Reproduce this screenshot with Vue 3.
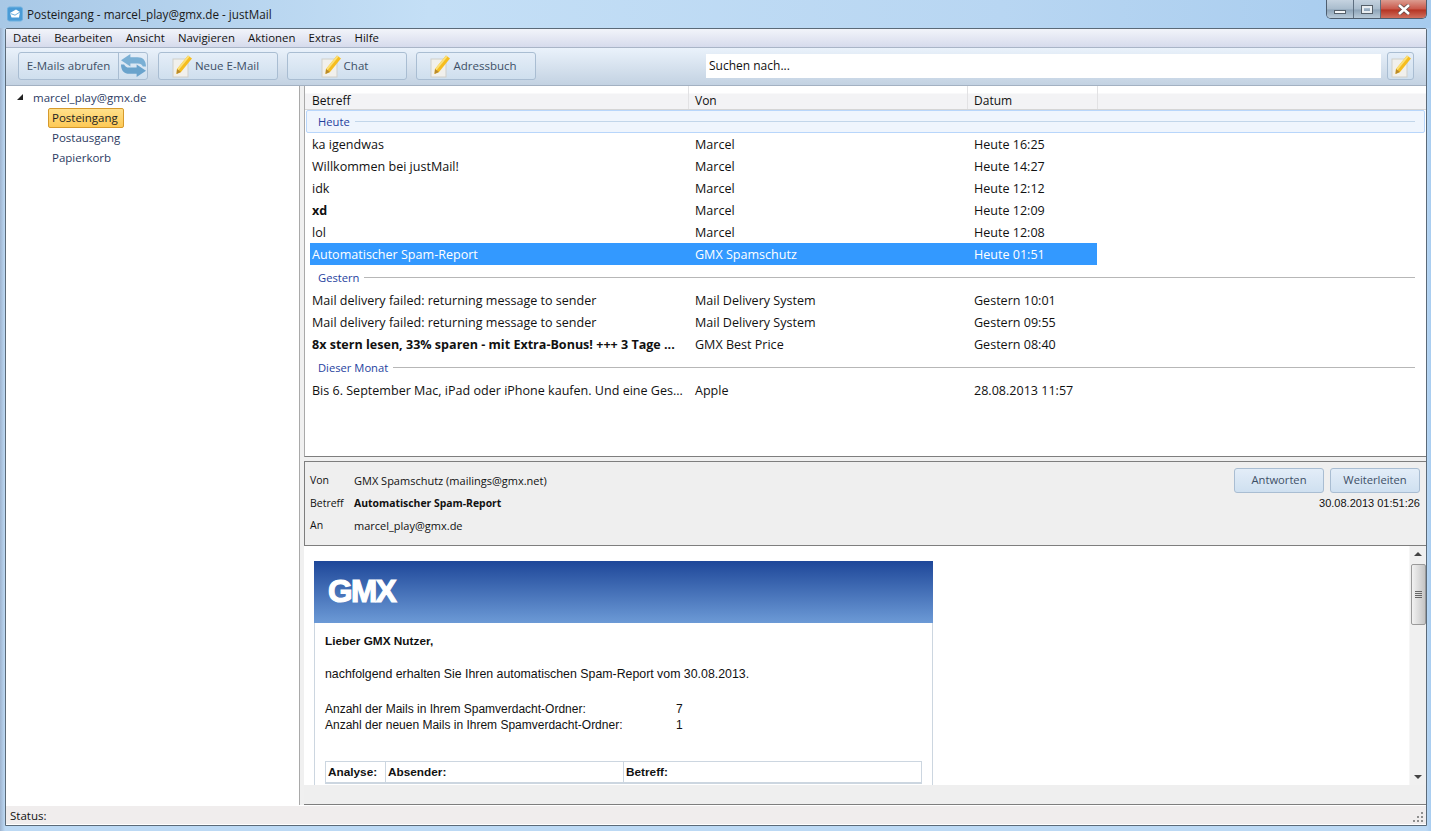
<template>
  <div class="window">
    <div class="titlebar">
      <svg class="app-icon" width="16" height="16" viewBox="0 0 16 16">
        <rect x="0.5" y="1" width="15" height="14" rx="2" fill="#4a9bd6" stroke="#6fb1e0" />
        <path d="M3 7 L9 3.5 L13 6 L12 11.5 L4.5 11.5 Z" fill="#fff" />
        <path d="M3.5 7.5 L8 9.2 L13 6" fill="none" stroke="#6aaedd" />
      </svg>
      <span class="title-text">Posteingang - marcel_play@gmx.de - justMail</span>
      <div class="win-controls">
        <div class="win-btn min"><i></i></div>
        <div class="win-btn max"><i></i></div>
        <div class="win-btn close">
          <svg width="14" height="11" viewBox="0 0 14 11">
            <path d="M2 1 L12 10 M12 1 L2 10" stroke="#5b4a4a" stroke-width="4" />
            <path d="M2 1 L12 10 M12 1 L2 10" stroke="#fff" stroke-width="2.6" />
          </svg>
        </div>
      </div>
    </div>

    <div class="client">
      <div class="menubar">
        <span v-for="m in menus" :key="m">{{ m }}</span>
      </div>

      <div class="toolbar">
        <div class="tb-btn fetch">
          <span class="fetch-label">E-Mails abrufen</span>
          <span class="fetch-icon">
            <svg width="25" height="23" viewBox="0 0 24 22">
              <path d="M9 0 L0 6 L9 12 V9 H16 C19 9 20 10 21 12 L24 12 C24 6 21 3 16 3 H9 Z" fill="#7aafd4" />
              <path d="M15 22 L24 16 L15 10 V13 H8 C5 13 4 12 3 10 L0 10 C0 16 3 19 8 19 H15 Z" fill="#6aa3cc" />
            </svg>
          </span>
        </div>
        <div v-for="b in toolButtons" :key="b" class="tb-btn wide">
          <svg class="note" width="20" height="24" viewBox="0 0 20 24">
            <rect x="1" y="5" width="15" height="18" fill="#f1f0ec" stroke="#cfcfca" />
            <path d="M5 15 L16 1.5 L20 4.5 L9 18 L4.5 20 Z" fill="#f5bd1f" />
            <path d="M5 15 L16 1.5 L17.5 2.7 L6.5 16.2 Z" fill="#fbe07a" />
            <path d="M5 15 L4.5 20 L9 18 Z" fill="#b98a2e" />
          </svg>
          <span>{{ b }}</span>
        </div>
        <div class="search">Suchen nach...</div>
        <div class="tb-btn square">
          <svg class="note" width="20" height="24" viewBox="0 0 20 24">
            <rect x="1" y="5" width="15" height="18" fill="#f1f0ec" stroke="#cfcfca" />
            <path d="M5 15 L16 1.5 L20 4.5 L9 18 L4.5 20 Z" fill="#f5bd1f" />
            <path d="M5 15 L16 1.5 L17.5 2.7 L6.5 16.2 Z" fill="#fbe07a" />
            <path d="M5 15 L4.5 20 L9 18 Z" fill="#b98a2e" />
          </svg>
        </div>
      </div>

      <div class="main">
        <aside class="tree">
          <div class="tree-root">
            <span class="arrow"></span>
            <span>marcel_play@gmx.de</span>
          </div>
          <div v-for="f in folders" :key="f" class="folder" :class="{ active: f === 'Posteingang' }">{{ f }}</div>
        </aside>

        <section class="right">
          <div class="list">
            <div class="list-head">
              <div class="hc h1">Betreff</div>
              <div class="hc h2">Von</div>
              <div class="hc h3">Datum</div>
            </div>
            <template v-for="g in groups" :key="g.name">
              <div class="group" :class="{ current: g.current }">
                <span>{{ g.name }}</span>
                <i></i>
              </div>
              <div v-for="r in g.rows" :key="r.subject + r.date" class="row" :class="{ selected: r.selected, unread: r.unread }">
                <span class="cell">{{ r.subject }}</span>
                <span class="cell">{{ r.from }}</span>
                <span class="cell">{{ r.date }}</span>
              </div>
            </template>
          </div>

          <div class="detail">
            <div class="meta">
              <div class="meta-row"><span class="k">Von</span><span>GMX Spamschutz (mailings@gmx.net)</span></div>
              <div class="meta-row"><span class="k">Betreff</span><b>Automatischer Spam-Report</b></div>
              <div class="meta-row"><span class="k">An</span><span>marcel_play@gmx.de</span></div>
            </div>
            <div class="actions">
              <div class="action-btns">
                <div class="act">Antworten</div>
                <div class="act">Weiterleiten</div>
              </div>
              <div class="stamp">30.08.2013 01:51:26</div>
            </div>
          </div>

          <div class="preview">
            <div class="mail-scroll">
              <div class="mail">
                <div class="mail-head"><span class="gmx">GMX</span></div>
                <div class="mail-body">
                  <p class="hello">Lieber GMX Nutzer,</p>
                  <p class="intro">nachfolgend erhalten Sie Ihren automatischen Spam-Report vom 30.08.2013.</p>
                  <div class="stat"><span>Anzahl der Mails in Ihrem Spamverdacht-Ordner:</span><span>7</span></div>
                  <div class="stat"><span>Anzahl der neuen Mails in Ihrem Spamverdacht-Ordner:</span><span>1</span></div>
                  <div class="spam-table">
                    <div class="tc">Analyse:</div>
                    <div class="tc">Absender:</div>
                    <div class="tc">Betreff:</div>
                  </div>
                </div>
              </div>
            </div>
            <div class="scrollbar">
              <span class="up"></span>
              <div class="thumb"><i></i><i></i><i></i><i></i></div>
              <span class="down"></span>
            </div>
          </div>
          <div class="preview-foot"></div>
        </section>
      </div>

      <div class="status">
        <span>Status:</span>
        <svg class="grip" width="11" height="11" viewBox="0 0 11 11">
          <path d="M8 0h2v2H8zM4 4h2v2H4zM8 4h2v2H8zM0 8h2v2H0zM4 8h2v2H4zM8 8h2v2H8z" fill="#8f8f8f" />
        </svg>
      </div>
    </div>
  </div>
</template>

<script setup>
const menus = ['Datei', 'Bearbeiten', 'Ansicht', 'Navigieren', 'Aktionen', 'Extras', 'Hilfe']
const toolButtons = ['Neue E-Mail', 'Chat', 'Adressbuch']
const folders = ['Posteingang', 'Postausgang', 'Papierkorb']

const groups = [
  {
    name: 'Heute',
    current: true,
    rows: [
      { subject: 'ka igendwas', from: 'Marcel', date: 'Heute 16:25' },
      { subject: 'Willkommen bei justMail!', from: 'Marcel', date: 'Heute 14:27' },
      { subject: 'idk', from: 'Marcel', date: 'Heute 12:12' },
      { subject: 'xd', from: 'Marcel', date: 'Heute 12:09', unread: true },
      { subject: 'lol', from: 'Marcel', date: 'Heute 12:08' },
      { subject: 'Automatischer Spam-Report', from: 'GMX Spamschutz', date: 'Heute 01:51', selected: true }
    ]
  },
  {
    name: 'Gestern',
    rows: [
      { subject: 'Mail delivery failed: returning message to sender', from: 'Mail Delivery System', date: 'Gestern 10:01' },
      { subject: 'Mail delivery failed: returning message to sender', from: 'Mail Delivery System', date: 'Gestern 09:55' },
      { subject: '8x stern lesen, 33% sparen - mit Extra-Bonus! +++ 3 Tage ...', from: 'GMX Best Price', date: 'Gestern 08:40', unread: true }
    ]
  },
  {
    name: 'Dieser Monat',
    rows: [
      { subject: 'Bis 6. September Mac, iPad oder iPhone kaufen. Und eine Ges...', from: 'Apple', date: '28.08.2013 11:57' }
    ]
  }
]
</script>

<style>
html, body {
  margin: 0;
  overflow: hidden;
}
</style>

<style scoped>
.window {
  width: 1431px;
  height: 831px;
  display: flex;
  flex-direction: column;
  box-sizing: border-box;
  overflow: hidden;
  font-family: "Open Sans", "Noto Sans", sans-serif;
  font-size: 12px;
  color: #111;
  background: linear-gradient(90deg, #9fb4cf 0, #bcd9f4 5px, #bcd9f4 1426px, #a9cdf0 100%);
}

.titlebar {
  height: 28px;
  flex-shrink: 0;
  display: flex;
  align-items: center;
  padding-left: 7px;
  background: linear-gradient(90deg, #a8c8e6 0, #c4dff6 30%, #b8d6f2 70%, #a6cbee 100%);
  position: relative;
}

.app-icon {
  margin-right: 4px;
}

.title-text {
  font-size: 11.7px;
  color: #1a1a1a;
}

.win-controls {
  position: absolute;
  top: 0;
  right: 4px;
  display: flex;
  height: 18px;
  border: 1px solid #4e5d6e;
  border-top: 0;
  border-radius: 0 0 5px 5px;
  overflow: hidden;
}

.win-btn {
  display: flex;
  align-items: center;
  justify-content: center;
  box-sizing: border-box;
  border-left: 1px solid #5e6f80;
  background: linear-gradient(#c5d3e0 0, #a9bccd 50%, #8ea4b8 55%, #b9cad8 100%);
}

.win-btn.min {
  width: 26px;
  border-left: 0;
}

.win-btn.min i {
  width: 10px;
  height: 2px;
  margin-top: 5px;
  background: #f4f6f8;
  border: 1px solid #56606a;
}

.win-btn.max {
  width: 27px;
}

.win-btn.max i {
  width: 6px;
  height: 3px;
  border: 2px solid #e8edf1;
  outline: 1px solid #56606a;
}

.win-btn.close {
  width: 46px;
  background: linear-gradient(#dc9c90 0, #c9584a 50%, #b53423 55%, #d0705e 100%);
}

.client {
  flex: 1;
  min-height: 0;
  display: flex;
  flex-direction: column;
  margin: 0 4px 5px 5px;
  border: 1px solid #5b6a78;
  border-radius: 2px 2px 0 0;
  background: #f0f0f0;
}

.menubar {
  height: 16px;
  padding: 0 0 2px 7px;
  flex-shrink: 0;
  display: flex;
  align-items: center;
  gap: 13.2px;
  background: linear-gradient(#f2f4fa, #d6dbec);
  border-bottom: 1px solid #a9b5c7;
  font-size: 11.4px;
  color: #111;
}

.toolbar {
  height: 38px;
  flex-shrink: 0;
  display: flex;
  align-items: center;
  box-sizing: border-box;
  padding: 0 11px 2px 12px;
  background: linear-gradient(#eaf2fb, #c3d2e2);
  border-bottom: 1px solid #a3b1c2;
}

.tb-btn {
  height: 28px;
  box-sizing: border-box;
  display: flex;
  align-items: center;
  justify-content: center;
  gap: 3px;
  border: 1px solid #a9bdd2;
  border-radius: 3px;
  background: linear-gradient(#e5eef8, #cfdfee);
  color: #3d4f66;
  font-size: 11.5px;
}

.fetch {
  width: 130px;
  margin-right: 10px;
  gap: 0;
  justify-content: flex-start;
}

.fetch-label {
  width: 99px;
  height: 100%;
  display: flex;
  align-items: center;
  justify-content: center;
  border-right: 1px solid #a9bdd2;
}

.fetch-icon {
  display: flex;
  flex: 1;
  justify-content: center;
}

.wide {
  width: 120px;
  margin-right: 9px;
  padding-right: 5px;
}

.search {
  width: 675px;
  height: 24px;
  box-sizing: border-box;
  margin-left: 161px;
  margin-right: 6px;
  padding: 3px 3px 0;
  background: #fff;
  color: #111;
  font-size: 12px;
}

.square {
  width: 27px;
}

.main {
  flex: 1;
  min-height: 0;
  display: flex;
}

.tree {
  width: 293px;
  flex-shrink: 0;
  background: #fff;
  border-right: 1px solid #a9a9a9;
  padding-top: 2px;
  color: #2c3b63;
  font-size: 11.5px;
}

.tree-root {
  display: flex;
  align-items: center;
  gap: 10px;
  height: 18px;
  margin-bottom: 2px;
  padding-left: 11px;
}

.arrow {
  width: 0;
  height: 0;
  border-style: solid;
  border-width: 0 0 6px 6px;
  border-color: transparent transparent #222 transparent;
}

.folder {
  width: fit-content;
  height: 20px;
  line-height: 18px;
  margin-left: 42px;
  padding: 0 3px;
  box-sizing: border-box;
  border: 1px solid transparent;
  border-radius: 2px;
}

.folder.active {
  width: 76px;
  background: linear-gradient(#ffe08a, #fdc956);
  border-color: #d69a2c;
  color: #222;
}

.right {
  flex: 1;
  min-width: 0;
  display: flex;
  flex-direction: column;
  margin-left: 4px;
}

.list {
  height: 371px;
  flex-shrink: 0;
  box-sizing: border-box;
  background: #fff;
  border-left: 1px solid #a9a9a9;
  border-bottom: 1px solid #7e7e7e;
  overflow: hidden;
}

.list-head {
  height: 24px;
  display: flex;
  background: linear-gradient(#fff 0, #fff 30%, #f3f3f5 35%, #f3f3f5 100%);
  border-bottom: 1px solid #d5d5d5;
  box-sizing: border-box;
  font-size: 12px;
}

.hc {
  box-sizing: border-box;
  padding: 6px 0 0 6px;
  border-right: 1px solid #e2e2e4;
}

.h1 {
  width: 384px;
  padding-left: 7px;
}

.h2 {
  width: 279px;
}

.h3 {
  width: 130px;
}

.group {
  height: 23px;
  box-sizing: border-box;
  display: flex;
  align-items: center;
  padding: 0 9px 0 11px;
  margin: 1px 1px 0;
  color: #1f3f9e;
  font-size: 11.2px;
  border: 1px solid transparent;
  border-radius: 2px;
}

.group i {
  flex: 1;
  height: 1px;
  margin-left: 5px;
  background: #b7b7b7;
}

.group.current {
  margin-top: 0;
  background: #eff5fd;
  border-color: #b8d6fb;
}

.group.current i {
  background: #c2d6ea;
}

.row {
  height: 22px;
  width: 787px;
  margin-left: 5px;
  display: grid;
  grid-template-columns: 383px 279px 1fr;
  align-items: center;
  padding-left: 2px;
  box-sizing: border-box;
  font-size: 12.55px;
  color: #111;
}

.cell {
  white-space: nowrap;
}

.row.selected {
  background: #3399ff;
  color: #fff;
}

.row.unread {
  font-weight: 700;
}

.row.unread .cell + .cell {
  font-weight: 400;
}

.detail {
  height: 85px;
  flex-shrink: 0;
  box-sizing: border-box;
  margin-top: 4px;
  display: flex;
  justify-content: space-between;
  background: #efefef;
  border: 1px solid #7e7e7e;
  border-right: 0;
}

.meta {
  padding: 7px 0 0 5px;
  font-size: 11px;
}

.meta-row {
  display: flex;
  height: 22.5px;
  align-items: center;
}

.meta-row .k {
  width: 44px;
  font-size: 10.5px;
}

.meta-row b {
  font-size: 10.4px;
}

.actions {
  padding: 6px 6px 0 0;
  display: flex;
  flex-direction: column;
  align-items: flex-end;
}

.action-btns {
  display: flex;
  gap: 6px;
}

.act {
  width: 90px;
  height: 25px;
  box-sizing: border-box;
  display: flex;
  align-items: center;
  justify-content: center;
  padding-bottom: 2px;
  border: 1px solid #a9bdd2;
  border-radius: 3px;
  background: linear-gradient(#e3edf8, #cfe0f0);
  color: #3d4f66;
  font-size: 11.2px;
}

.stamp {
  margin-top: 4px;
  font-family: "Liberation Sans", Arial, sans-serif;
  font-size: 11px;
}

.preview {
  height: 239px;
  flex-shrink: 0;
  display: flex;
  background: #fff;
  overflow: hidden;
}

.mail-scroll {
  flex: 1;
  min-width: 0;
  padding: 15px 0 0 10px;
}

.mail {
  width: 619px;
  font-family: "Liberation Sans", Arial, sans-serif;
  font-size: 12px;
  color: #111;
}

.mail-head {
  height: 62px;
  display: flex;
  align-items: center;
  padding: 0 0 2px 14px;
  box-sizing: border-box;
  background: linear-gradient(#1e4799, #6c9ad6);
}

.gmx {
  font-size: 31.5px;
  font-weight: 700;
  letter-spacing: -1.5px;
  color: #fff;
  -webkit-text-stroke: 1.2px #fff;
}

.mail-body {
  box-sizing: border-box;
  padding: 0 10px 0 10px;
  height: 400px;
  border-left: 1px solid #ccd6e0;
  border-right: 1px solid #ccd6e0;
}

.mail-body p {
  margin: 0;
}

.hello {
  padding-top: 11px;
  height: 33px;
  box-sizing: content-box;
  font-weight: 700;
  font-size: 11.8px;
}

.intro {
  height: 35px;
  font-size: 12.35px;
}

.stat {
  display: grid;
  grid-template-columns: 351px 1fr;
  height: 16px;
}

.spam-table {
  margin-top: 27px;
  display: grid;
  grid-template-columns: 59px 238px 1fr;
  border: 1px solid #ccd6e0;
  font-weight: 700;
  font-size: 11.8px;
}

.tc {
  height: 20px;
  line-height: 20px;
  padding-left: 2px;
  border-bottom: 1px solid #ccd6e0;
}

.tc + .tc {
  border-left: 1px solid #ccd6e0;
}

.scrollbar {
  width: 17px;
  flex-shrink: 0;
  position: relative;
  background: #f0f0f0;
  border-left: 1px solid #f6f6f6;
  box-sizing: border-box;
}

.up,
.down {
  position: absolute;
  left: 4px;
  width: 0;
  height: 0;
  border-left: 4px solid transparent;
  border-right: 4px solid transparent;
}

.up {
  top: 6px;
  border-bottom: 4px solid #444;
}

.down {
  bottom: 6px;
  border-top: 4px solid #444;
}

.thumb {
  position: absolute;
  top: 18px;
  left: 1px;
  width: 15px;
  height: 61px;
  box-sizing: border-box;
  border: 1px solid #9a9a9a;
  border-radius: 2px;
  background: linear-gradient(90deg, #f2f2f2, #dcdcdc 50%, #c4c4c4);
  display: flex;
  flex-direction: column;
  align-items: center;
  justify-content: center;
  gap: 1px;
}

.thumb i {
  width: 7px;
  height: 1px;
  background: #666;
}

.preview-foot {
  flex: 1;
  background: #efefef;
  border-bottom: 1px solid #7e7e7e;
}

.status {
  height: 20px;
  flex-shrink: 0;
  box-sizing: border-box;
  display: flex;
  align-items: center;
  justify-content: space-between;
  padding: 0 2px 0 4px;
  background: #f0eded;
  border-top: 1px solid #fff;
  border-bottom: 1px solid #fff;
  font-size: 11.5px;
}

.grip {
  align-self: flex-end;
  margin-bottom: 1px;
}
</style>
